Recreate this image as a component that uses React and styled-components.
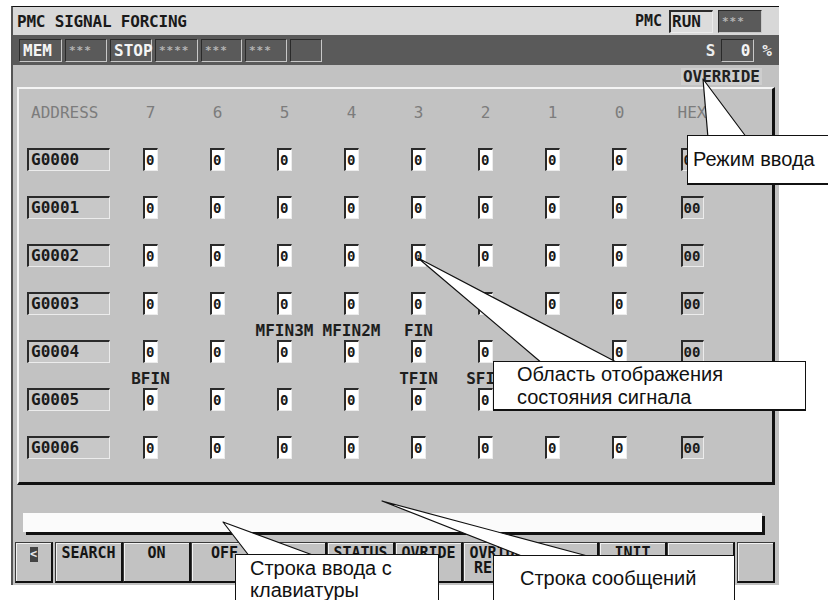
import React from "react";
import styled, { createGlobalStyle, css } from "styled-components";

const GlobalStyle = createGlobalStyle`
  html, body {
    margin: 0;
    padding: 0;
    background: #ffffff;
  }
`;

const MONO = `"DejaVu Sans Mono", "Liberation Mono", monospace`;

const Page = styled.div`
  position: relative;
  width: 828px;
  height: 600px;
  overflow: hidden;
  padding: 6px 0 0 11px;
  box-sizing: border-box;
  font-family: ${MONO};
`;

const Screen = styled.div`
  width: 768px;
  height: 579px;
  box-sizing: border-box;
  display: flex;
  flex-direction: column;
  background: #c2c2c2;
  border-top: 1px solid #111;
  border-left: 2px solid #555;
`;

const TitleBar = styled.div`
  height: 28px;
  display: flex;
  align-items: center;
  justify-content: space-between;
  padding: 0 17px 0 4px;
  background: #d8d8d8;
`;

const Title = styled.span`
  font-size: 16px;
  font-weight: bold;
  color: #1a1a1a;
  letter-spacing: -0.2px;
`;

const TitleRight = styled.div`
  display: flex;
  align-items: center;
  gap: 5px;
`;

const Tag = styled.span`
  font-size: 15px;
  font-weight: bold;
  color: #1a1a1a;
  margin-right: 2px;
`;

const sunken = css`
  box-sizing: border-box;
  border-top: 2px solid #2a2a2a;
  border-left: 2px solid #2a2a2a;
  border-right: 1px solid #ececec;
  border-bottom: 1px solid #ececec;
`;

const RunBox = styled.div`
  ${sunken};
  width: 44px;
  height: 23px;
  background: #dcdcdc;
  font-size: 16px;
  font-weight: bold;
  color: #1a1a1a;
  line-height: 20px;
  padding-left: 1px;
`;

const DarkBox = styled.div`
  box-sizing: border-box;
  width: ${p => p.$w || 44}px;
  height: ${p => p.$h || 23}px;
  background: #5a5a5a;
  border-top: 1px solid #2a2a2a;
  border-left: 1px solid #2a2a2a;
  border-right: 1px solid #c8c8c8;
  border-bottom: 1px solid #c8c8c8;
  display: flex;
  align-items: center;
  justify-content: ${p => (p.$right ? "flex-end" : "flex-start")};
  padding: 0 3px;
  font-size: ${p => (p.$dim ? 11 : 16)}px;
  font-weight: bold;
  color: ${p => (p.$dim ? "#b4b4b4" : "#f4f4f4")};
  letter-spacing: ${p => (p.$dim ? "1px" : "0")};
  margin-top: ${p => p.$mt || 0}px;
`;

const StatusBar = styled.div`
  height: 30px;
  display: flex;
  align-items: center;
  padding: 0 7px 0 6px;
  background: #5a5a5a;
  gap: 3px;
`;

const Spacer = styled.div`
  flex: 1;
`;

const StatusLabel = styled.span`
  font-size: 16px;
  font-weight: bold;
  color: #ececec;
  margin: 0 ${p => p.$mr || 0}px 0 ${p => p.$ml || 0}px;
`;

const ModeRow = styled.div`
  height: 22px;
  display: flex;
  align-items: center;
  justify-content: flex-end;
  padding-right: 17px;
`;

const ModeText = styled.span`
  font-size: 16px;
  font-weight: bold;
  color: #222;
  background: #cecece;
  padding: 0 2px;
  line-height: 17px;
`;

const Panel = styled.div`
  height: 398px;
  margin: 0 4px;
  box-sizing: border-box;
  border-top: 2px solid #f4f4f4;
  border-left: 2px solid #f4f4f4;
  border-right: 3px solid #111;
  border-bottom: 3px solid #111;
  padding: 12px 0 0 8px;
  display: flex;
  flex-direction: column;
`;

const gridCols = css`
  display: grid;
  grid-template-columns: 90px repeat(8, 67px) 78px;
`;

const HeaderRow = styled.div`
  ${gridCols};
  height: 22px;
  align-items: center;
  margin-bottom: 7px;
`;

const HeadCell = styled.span`
  font-size: 16px;
  color: #7c7c7c;
  text-align: ${p => (p.$left ? "left" : "center")};
  padding-left: ${p => (p.$left ? 4 : 0)}px;
`;

const DataRow = styled.div`
  ${gridCols};
  grid-template-rows: 18px 23px;
  padding-bottom: 7px;
`;

const SignalName = styled.span`
  grid-row: 1;
  grid-column: ${p => p.$col};
  font-size: 16px;
  font-weight: bold;
  color: #1e1e1e;
  text-align: center;
  white-space: nowrap;
  line-height: 18px;
`;

const AddrBox = styled.div`
  ${sunken};
  grid-row: 2;
  grid-column: 1;
  width: 83px;
  height: 23px;
  background: #c8c8c8;
  font-size: 16px;
  font-weight: bold;
  color: #1a1a1a;
  line-height: 20px;
  padding-left: 2px;
`;

const BitBox = styled.div`
  ${sunken};
  grid-row: 2;
  grid-column: ${p => p.$col};
  justify-self: center;
  width: ${p => (p.$hex ? 23 : 15)}px;
  height: 23px;
  background: ${p => (p.$hex ? "#c8c8c8" : "#ffffff")};
  font-size: 14px;
  font-weight: bold;
  color: #1a1a1a;
  line-height: 20px;
  padding-left: 1px;
  overflow: hidden;
`;

const MessageArea = styled.div`
  height: 28px;
`;

const InputLine = styled.div`
  height: 19px;
  margin: 0 17px 0 10px;
  background: #fbfbfb;
  box-shadow: 3px 3px 0 #111;
`;

const KeyRow = styled.div`
  height: 41px;
  margin-top: 10px;
  display: flex;
  padding-left: 2px;
  gap: 2px;
`;

const KeyGroup = styled.div`
  display: flex;
`;

const Key = styled.div`
  box-sizing: border-box;
  width: ${p => p.$w || 68}px;
  height: 41px;
  background: #c2c2c2;
  border: 1px solid #3a3a3a;
  border-right: 2px solid #111;
  border-bottom: 2px solid #111;
  box-shadow: inset 1px 1px 0 #f2f2f2;
  display: flex;
  flex-direction: column;
  align-items: center;
  justify-content: flex-start;
  padding-top: 3px;
  font-size: 15px;
  font-weight: bold;
  color: #151515;
  line-height: 15px;
  white-space: nowrap;
`;

const Arrow = styled.span`
  display: inline-block;
  width: 8px;
  height: 15px;
  background: #444;
  color: #e8e8e8;
  font-size: 12px;
  line-height: 15px;
  text-align: center;
  margin-top: 1px;
`;

const Tails = styled.svg`
  position: absolute;
  left: 0;
  top: 0;
  z-index: 1;
  pointer-events: none;
`;

const Callout = styled.div`
  position: absolute;
  z-index: 2;
  left: ${p => p.$x}px;
  top: ${p => p.$y}px;
  width: ${p => p.$w}px;
  height: ${p => p.$h}px;
  box-sizing: border-box;
  background: #ffffff;
  border: 1px solid #111;
  border-bottom-width: 2px;
  padding: ${p => p.$pad || "0 0 0 5px"};
  font-family: "Liberation Sans", Arial, sans-serif;
  font-size: 20px;
  line-height: ${p => p.$lh || 23}px;
  color: #111;
  display: flex;
  flex-direction: column;
  justify-content: ${p => (p.$center ? "center" : "flex-start")};
`;

const rows = ["G0000", "G0001", "G0002", "G0003", "G0004", "G0005", "G0006"];

const signals = {
  G0004: { 5: "MFIN3M", 4: "MFIN2M", 3: "FIN" },
  G0005: { 7: "BFIN", 3: "TFIN", 2: "SFIN" },
};

const bits = [7, 6, 5, 4, 3, 2, 1, 0];

const softKeys = [
  ["SEARCH"],
  ["ON"],
  ["OFF"],
  [""],
  ["STATUS"],
  ["OVRIDE"],
  ["OVRIDE", "RESET"],
  [""],
  ["INIT"],
  [""],
];

function Row({ addr }) {
  const names = signals[addr] || {};
  return (
    <DataRow>
      {bits.map(b =>
        names[b] ? (
          <SignalName key={"n" + b} $col={9 - b}>
            {names[b]}
          </SignalName>
        ) : null
      )}
      <AddrBox>{addr}</AddrBox>
      {bits.map(b => (
        <BitBox key={b} $col={9 - b}>
          0
        </BitBox>
      ))}
      <BitBox $col={10} $hex>
        00
      </BitBox>
    </DataRow>
  );
}

export default function App() {
  return (
    <Page>
      <GlobalStyle />
      <Screen>
        <TitleBar>
          <Title>PMC SIGNAL FORCING</Title>
          <TitleRight>
            <Tag>PMC</Tag>
            <RunBox>RUN</RunBox>
            <DarkBox $dim $mt={1}>***</DarkBox>
          </TitleRight>
        </TitleBar>

        <StatusBar>
          <DarkBox $w={43}>MEM</DarkBox>
          <DarkBox $w={42} $dim>***</DarkBox>
          <DarkBox $w={42}>STOP</DarkBox>
          <DarkBox $w={43} $dim>****</DarkBox>
          <DarkBox $w={41} $dim>***</DarkBox>
          <DarkBox $w={42} $dim>***</DarkBox>
          <DarkBox $w={32} />
          <Spacer />
          <StatusLabel $mr={3}>S</StatusLabel>
          <DarkBox $w={33} $right>0</DarkBox>
          <StatusLabel $ml={5}>%</StatusLabel>
        </StatusBar>

        <ModeRow>
          <ModeText>OVERRIDE</ModeText>
        </ModeRow>

        <Panel>
          <HeaderRow>
            <HeadCell $left>ADDRESS</HeadCell>
            {bits.map(b => (
              <HeadCell key={b}>{b}</HeadCell>
            ))}
            <HeadCell>HEX</HeadCell>
          </HeaderRow>
          {rows.map(r => (
            <Row key={r} addr={r} />
          ))}
        </Panel>

        <MessageArea />
        <InputLine />

        <KeyRow>
          <Key $w={38}>
            <Arrow>&lt;</Arrow>
          </Key>
          <KeyGroup>
            {softKeys.map((k, i) => (
              <Key key={i}>
                {k.map(line => (
                  <span key={line}>{line}</span>
                ))}
              </Key>
            ))}
          </KeyGroup>
          <Key $w={38} />
        </KeyRow>
      </Screen>

      <Tails width="828" height="600" viewBox="0 0 828 600">
        <g fill="#ffffff" stroke="#111" strokeWidth="1.2" strokeLinejoin="round">
          <polygon points="703,79 708,138 747,138" />
          <polygon points="418,258 543,364 620,364" />
          <polygon points="223,522 250,557 318,557" />
          <polygon points="382,501 527,558 595,558" />
        </g>
      </Tails>

      <Callout $x={687} $y={135} $w={160} $h={50} $center>
        Режим ввода
      </Callout>
      <Callout $x={493} $y={361} $w={313} $h={50} $pad="1px 0 0 23px" $center>
        <span>Область отображения</span>
        <span>состояния сигнала</span>
      </Callout>
      <Callout $x={235} $y={554} $w={204} $h={60} $pad="2px 0 0 14px" $lh={22}>
        <span>Строка ввода с</span>
        <span>клавиатуры</span>
      </Callout>
      <Callout $x={493} $y={555} $w={242} $h={60} $pad="11px 0 0 26px">
        Строка сообщений
      </Callout>
    </Page>
  );
}
